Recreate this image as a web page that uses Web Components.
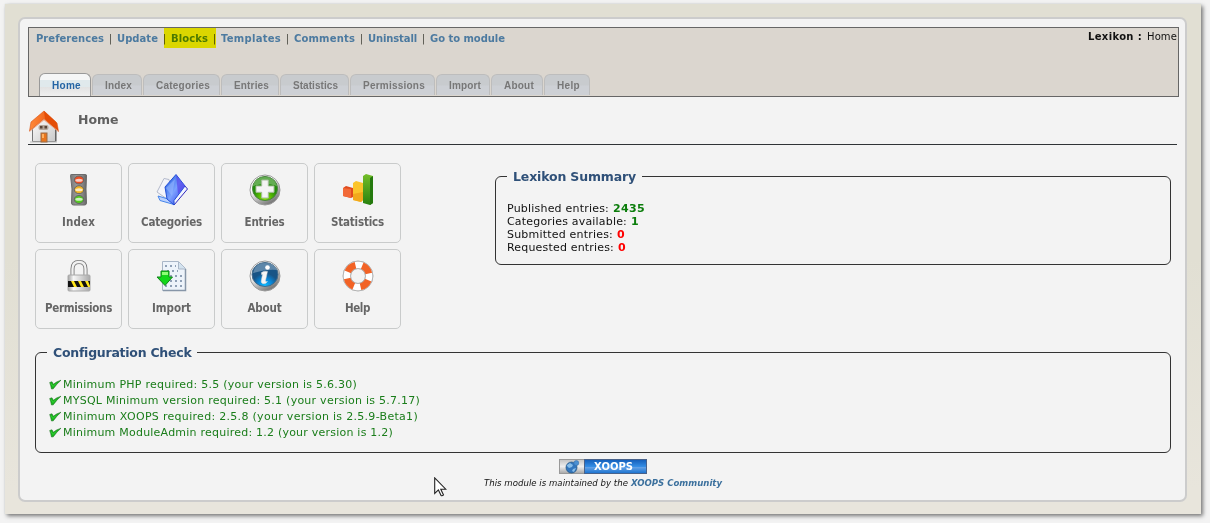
<!DOCTYPE html>
<html lang="en">
<head>
<meta charset="utf-8">
<title>Lexikon - Home</title>
<style>
html,body{margin:0;height:523px;overflow:hidden;background:#f3f3f3}
body{font:11px/13px "DejaVu Sans",Verdana,sans-serif;color:#111}
</style>
</head>
<body>
<admin-page></admin-page>
<script>
const define = (name, html, setup) => {
  const t = document.createElement('template');
  t.innerHTML = html;
  customElements.define(name, class extends HTMLElement {
    connectedCallback() {
      if (this.shadowRoot) return;
      this.attachShadow({mode: 'open'}).append(t.content.cloneNode(true));
      if (setup) setup(this, this.shadowRoot);
    }
  });
};

/* A run of text tracked so that it fills a given width */
define('fit-text', `<style>:host{display:inline-block;white-space:nowrap}span{display:inline-block}</style><span><slot></slot></span>`,
 (el, root) => {
  const w = +el.getAttribute('w'), s = root.querySelector('span');
  const n = el.textContent.length;
  const natural = s.getBoundingClientRect().width;
  if (natural) s.style.letterSpacing = ((w - natural) / n) + 'px';
  el.style.width = w + 'px';
 });

const icons = {
 home:`<svg viewBox="0 0 32 34" width="32" height="34"><defs><linearGradient id="r"><stop offset="0" stop-color="#ff8a3a"/><stop offset="1" stop-color="#e84c08"/></linearGradient><linearGradient id="w" x2="1" y2="1"><stop offset="0" stop-color="#fff"/><stop offset="1" stop-color="#c9c9c9"/></linearGradient></defs><path d="M4.500 18 16 7 27.500 19V31.500H4.500Z" fill="url(#w)" stroke="#777"/><path d="M28 20V31.500" stroke="#555"/><path d="M2 32H29" stroke="#bbb"/><path d="M16 1 3 12 1.500 21 16 9 30.500 21.500 29 13Z" fill="url(#r)" stroke="#d65312" stroke-width=".6"/><path d="m16 1 1 8L30 21 28 12Z" fill="#e44d06"/><path d="M1.500 21.500 16 9.800 30.500 21.500" fill="none" stroke="#e9a382"/><rect x="10.500" y="15" width="10" height="5" rx="2" fill="#b3a599"/><path d="M12 16h2.500v2.500H12zm4.500 0H19v2.500h-2.500z" fill="#594436"/><rect x="13" y="23" width="6" height="9" fill="#e8761e" stroke="#9b6d47"/><path d="M14 24h2v4h-2z" fill="#ffae5d"/></svg>`,
 index:`<svg viewBox="0 0 32 32"><defs><linearGradient id="t"><stop offset="0" stop-color="#777"/><stop offset=".5" stop-color="#a2a2a2"/><stop offset="1" stop-color="#666"/></linearGradient></defs><path d="M7.500 1.500Q7 .500 9 .500h13q2 0 1.500 1.500l-.5 13 .5 14q0 2-2 2h-11q-2 0-2-2l.5-14Z" fill="url(#t)" stroke="#6b6b6b"/><g stroke="#666"><ellipse cx="16" cy="6" rx="4.700" ry="4" fill="#ed4e24"/><ellipse cx="16" cy="15.700" rx="4.700" ry="4" fill="#f0b323"/><ellipse cx="16" cy="25.500" rx="4.700" ry="4" fill="#53cb20"/></g><g fill="#fff" opacity=".72"><ellipse cx="16" cy="6.200" rx="3.700" ry="1.500"/><ellipse cx="16" cy="15.800" rx="3.700" ry="1.500"/><ellipse cx="16" cy="25.300" rx="3.700" ry="1.500"/></g></svg>`,
 categories:`<svg viewBox="0 0 32 32"><defs><linearGradient id="b" x2="1" y2="1"><stop offset="0" stop-color="#1754d9"/><stop offset=".5" stop-color="#7ba2ff"/><stop offset="1" stop-color="#2931e1"/></linearGradient></defs><path d="M1 18 8 4.500l5 1L17 22l-6 3Z" fill="#f3f4fa" stroke="#b4bacb"/><path d="m2 22 10 3 6 5.500-14-4Z" fill="#b9d1ff" stroke="#4785ea"/><path d="m18 31 13.500-16-3-3.500L17 24Z" fill="#f1f5ff" stroke="#2d25bd"/><path d="M9 13 20 .500 29 12 18 26.500V31L11 25Z" fill="url(#b)" stroke="#2450d6"/><path d="M20 1 29 12 22 20Z" fill="#5746ea" opacity=".7"/><path d="M10 14 19 5 16 22Z" fill="#95b5ff" opacity=".6"/></svg>`,
 entries:`<svg viewBox="0 0 32 32"><defs><radialGradient id="g" cy=".9"><stop offset="0" stop-color="#8ee500"/><stop offset="1" stop-color="#218c09"/></radialGradient><linearGradient id="s" x2=".6" y2="1"><stop offset=".4" stop-color="#fff"/><stop offset="1" stop-color="#777"/></linearGradient></defs><circle cx="16" cy="16" r="15" fill="url(#s)" stroke="#999"/><ellipse cx="16" cy="14.500" rx="12.500" ry="12" fill="url(#g)" stroke="#48823e"/><path d="M4 12Q7 3 16 3t12 9q-12-4-24 0" fill="#fff" opacity=".3"/><path d="M12.700 6h6.600v6H25v6.300h-5.700V24h-6.600v-5.700H7V12h5.700Z" fill="#f4f4f4" stroke="#a7bd9d"/></svg>`,
 statistics:`<svg viewBox="0 0 32 32"><defs><linearGradient id="g2" y2="1" x2="0"><stop stop-color="#74be28"/><stop offset="1" stop-color="#27810f"/></linearGradient></defs><path d="m1 14 3-2 7 2v9l-2 1-8-2Z" fill="#e04a1c"/><path d="m1 14 8 1v9l-8-2Z" fill="#f26a38"/><path d="m11 9 3-2 7 2v17l-2 2-8-2Z" fill="#fbc42b"/><path d="M11 20 21 18v8l-2 2-8-2Z" fill="#f2a81c"/><path d="m21 2 3-2 7 2v27l-3 2-7-2Z" fill="url(#g2)"/><path d="m28 4 3-2v27l-3 2Z" fill="#24790d"/></svg>`,
 permissions:`<svg viewBox="0 0 32 32"><defs><linearGradient id="m"><stop stop-color="#a1a1a1"/><stop offset=".25" stop-color="#f6f6f6"/><stop offset="1" stop-color="#aaa"/></linearGradient></defs><path d="M9.500 15V9q0-7 6.500-7t6.500 7v6" fill="none" stroke="#777" stroke-width="4"/><path d="M9.500 15V9q0-7 6.500-7t6.500 7v6" fill="none" stroke="#f1f1f1" stroke-width="2.300"/><rect x="5" y="15" width="22" height="16" rx="1" fill="url(#m)" stroke="#aaa"/><path d="M5 21h22v6H5z" fill="#ffe61b"/><path d="M5 21h3l3 6H5zm6 0h4l3 6h-4zm7 0h4l3 6h-4zm7 0h2v5z" fill="#111"/></svg>`,
 import:`<svg viewBox="0 0 32 32"><path d="M6.500 1.500h16l7 7v22h-23Z" fill="#edf3fa" stroke="#a9b6c7"/><path d="M22.500 2v7h7" fill="#d3e2ee" stroke="#a9b6c7"/><path d="M29.500 9v21.500H7" fill="none" stroke="#8796a8" stroke-width="1.500"/><path d="M9 6h11M11 11h11M14 16h13M14 21h13M9 26h17" stroke="#8fa0b6" stroke-width="2" stroke-dasharray="2 3"/><path d="M5 11h8v6h3.500L9 25.500 1 17h4Z" fill="#12d61a" stroke="#13821a"/><path d="M6 12h6v3H6z" fill="#8dff75"/></svg>`,
 about:`<svg viewBox="0 0 32 32"><defs><radialGradient id="i" cy=".95"><stop stop-color="#12bcff"/><stop offset=".5" stop-color="#0789dc"/><stop offset="1" stop-color="#185486"/></radialGradient><linearGradient id="s" x2=".6" y2="1"><stop offset=".4" stop-color="#fff"/><stop offset="1" stop-color="#777"/></linearGradient></defs><circle cx="16" cy="16" r="15" fill="url(#s)" stroke="#999"/><ellipse cx="16" cy="14.500" rx="13" ry="12" fill="url(#i)" stroke="#466b89"/><path d="M4 13Q6 3 16 3q9 0 12 7-11-1-24 3" fill="#fff" opacity=".3"/><circle cx="18.500" cy="7.500" r="2.300" fill="#fff"/><path d="M12.500 12.500q3-2 6-1l-2 9q0 2 2 1-2 3-5 2-2-1-1-4l1-5-1 0Z" fill="#f5f5f5" stroke="#d6d6d6" stroke-width=".5"/></svg>`,
 help:`<svg viewBox="0 0 32 32"><circle cx="16" cy="16" r="15" fill="none" stroke="#aaa"/><circle cx="16" cy="16" r="11" fill="none" stroke="#b9b9b9" stroke-width="8"/><circle cx="16" cy="16" r="11" fill="none" stroke="#fff" stroke-width="6.500"/><circle cx="16" cy="16" r="11" fill="none" stroke="#f26326" stroke-width="7" pathLength="80" stroke-dasharray="12 8" stroke-dashoffset="-5"/><circle cx="16" cy="16" r="7.500" fill="none" stroke="#aaa" stroke-width=".7"/></svg>`,
 check:`<svg viewBox="0 0 13 11" width="13" height="11"><path d="M.700 3.500 3 2.800 4.300 5.300Q7 2.800 12 1.200 7.500 5 4.300 9.800L2.500 10Q1.800 6.500.700 3.500Z" fill="#18b51c" stroke="#247427" stroke-width=".6"/><path d="m2 4.500 2 3 3-3" fill="none" stroke="#39d83b" stroke-width=".8"/></svg>`,
 cursor:`<svg viewBox="0 0 13 20" width="13" height="20"><path d="M.700.900v15.600l3.700-3.600 2.700 5.700q1.300.600 2.400-.700L6.800 12.200h5Z" fill="#fff" stroke="#222" stroke-width="1.100"/></svg>`,
 globe:`<svg viewBox="0 0 16 14" width="16" height="14"><circle cx="7.500" cy="7.500" r="5.500" fill="#3276bd" stroke="#23517d" stroke-width=".7"/><path d="m3 5 3-2 3 2-1 2-3 1-2-2m6 3 3-1-2 4-2-1" fill="#87bde9"/><circle cx="12.300" cy="3" r="2.500" fill="#4c90d2" stroke="#316da6" stroke-width=".5"/></svg>`
};
define('ui-icon', `<style>:host{display:block;width:32px;height:32px}svg{display:block}</style>`, (el, root) => root.append(document.createRange().createContextualFragment(icons[el.getAttribute('name')])));

define('nav-link', `<style>
:host{display:flex;position:relative;font:bold 10px/13px "DejaVu Sans",sans-serif;color:#4c7aa0}
:host([marked])::after{content:"";position:absolute;left:-7px;right:-8px;top:-4px;height:20px;background:#ff0;mix-blend-mode:multiply}
</style><slot></slot>`);

define('nav-tab', `<style>
:host{display:block;box-sizing:border-box;height:21px;margin-top:1px;padding:3px 0 0 12px;border:1px solid #bdbdbd;border-bottom:0;border-radius:6px 6px 0 0;background:linear-gradient(#c8cbce 0 50%,#cdd0d5 55%);font:bold 10px/16px "Liberation Sans",Arial,sans-serif;color:#777}
:host([active]){height:23px;margin-top:0;padding-top:4px;border-color:#999;background:linear-gradient(#f5f6f6 0 25%,#e0e9ec 26% 58%,#e2e2e2 60%,#f0f0f0);color:#2464a4}
</style><slot></slot>`);

define('module-header', `<style>
:host{display:flex;flex-direction:column;justify-content:space-between;box-sizing:border-box;width:1151px;height:70px;border:1px solid #666;background:#dbd6cf}
.top{display:flex;justify-content:space-between;padding:4px 1px 0 7px}
.links,.crumb{display:flex}.links{color:#333;font:10px/13px "DejaVu Sans",sans-serif}
.links i{font-style:normal;width:13px;text-align:center;color:#4b4b42}
.crumb{font:10px/13px "DejaVu Sans",sans-serif;color:#111;margin-top:-2px}
.tabs{display:flex;gap:1px;height:23px;padding-left:10px}
</style><div class="top"><div class="links"></div><div class="crumb"><b><fit-text w="54">Lexikon :</fit-text></b><span style="width:5px"></span><fit-text w="30">Home</fit-text></div></div><div class="tabs"></div>`, (el, root) => {
 root.querySelector('.links').innerHTML = [['Preferences',68],['Update',41],['Blocks',37],['Templates',60],['Comments',61],['Uninstall',49],['Go to module',75]]
  .map(([t,w]) => `<nav-link ${t==='Blocks'?'marked':''}><fit-text w="${w}">${t}</fit-text></nav-link>`).join('<i>|</i>');
 root.querySelector('.tabs').innerHTML = [['Home',52,29],['Index',50,27],['Categories',77,54],['Entries',58,35],['Statistics',69,45],['Permissions',85,62],['Import',54,32],['About',52,30],['Help',46,23]]
  .map(([t,w,f],i) => `<nav-tab style="width:${w}px" ${i?'':'active'}><fit-text w="${f}">${t}</fit-text></nav-tab>`).join('');
});

define('page-title', `<style>
:host{display:flex;width:1149px;height:34px;border-bottom:1px solid #2f3336;margin-top:13px}
ui-icon{height:34px;margin-right:18px}
div{font:bold 12.500px/17px "DejaVu Sans",sans-serif;color:#606060;margin-top:1px}
</style><ui-icon name="home"></ui-icon><div><fit-text w="39"><slot></slot></fit-text></div>`);

define('menu-button', `<style>
:host{display:flex;flex-direction:column;align-items:center;box-sizing:border-box;width:87px;height:80px;border:1px solid #c9cbcb;border-radius:5px;padding-top:10px;font:bold 11.500px/14px "DejaVu Sans Condensed","DejaVu Sans",sans-serif;color:#666}
.pic{margin:0 0 9px}
</style><div class="pic"></div><slot></slot>`, (el, root) => {
 root.querySelector('.pic').innerHTML = `<ui-icon name="${el.getAttribute('icon')}"></ui-icon>`;
});

define('info-panel', `<style>
:host{display:block}
fieldset{box-sizing:border-box;height:100%;margin:0;border:1px solid #333;border-radius:6px;padding:0;padding-left:11px;min-width:0}
legend{margin:0;padding:0 6px;font:bold 12.500px/15px "DejaVu Sans",sans-serif;color:#2f5078}
</style><fieldset><legend><slot name="title"></slot></legend><slot></slot></fieldset>`);

define('check-row', `<style>:host{display:flex;height:16px;color:#1a7d1a;font:11px/16px "DejaVu Sans",sans-serif}ui-icon{width:13px;height:11px;margin:2px 1px 0 2px}</style><ui-icon name="check"></ui-icon><slot></slot>`);

define('xoops-badge', `<style>
:host{display:flex;box-sizing:border-box;width:88px;height:15px;border:1px solid #999}
.l{width:25px;background:linear-gradient(#c6c6c6,#eee 50%,#aaa);padding-left:4px;box-sizing:border-box}
ui-icon{width:16px;height:14px}
.r{flex:1;margin:-1px;border:1px solid #48628b;background:linear-gradient(#1560bb,#348de5 50%,#6aa6e9 52%,#1d74d0);color:#fff;font:bold 10px/13px "DejaVu Sans",sans-serif;padding-left:9px}
</style><div class="l"><ui-icon name="globe"></ui-icon></div><div class="r"><fit-text w="39">XOOPS</fit-text></div>`);

const buttons = [['Index',33],['Categories',61],['Entries',40],['Statistics',53],['Permissions',67],['Import',39],['About',34],['Help',25]];
define('admin-page', `<style>
:host{display:block;box-sizing:border-box;height:523px;padding:4px 9px 9px 5px}
.frame{box-sizing:border-box;width:1196px;height:510px;padding:13px;background:linear-gradient(#e1dfd3,#e1dfd3 50%,#e8e5dc 95%);box-shadow:2px 2px 4px #777,0 0 1px #cfdcdb}
main{box-sizing:border-box;width:1169px;height:485px;border:2px solid #ccc;border-radius:7px;background:#f3f3f3;padding:8px}
.overview{display:flex;justify-content:space-between;margin:18px 6px 0 7px}
.grid{display:grid;grid-template-columns:repeat(4,87px);gap:6px}
.summary{width:676px;height:96px;margin-top:6px}
.config{width:1136px;height:108px;margin:16px 0 0 7px}
.rows{padding-top:18px}.rows div{display:flex;gap:4px;height:13px;white-space:nowrap}
.green{color:#0b7d0b;font-weight:bold}.red{color:#f00;font-weight:bold}
.checks{padding-top:17px}
footer{display:flex;flex-direction:column;align-items:center;margin:6px 0 0 1px}
.note{display:flex;gap:3px;font:italic 9.500px/14px "DejaVu Sans Condensed","DejaVu Sans",sans-serif;margin-top:2px;color:#111}
.note b{color:#3b709d}
.pointer{position:absolute;left:434px;top:477px;width:13px;height:20px}
</style><div class="frame"><main>
<module-header></module-header>
<page-title>Home</page-title>
<section class="overview"><div class="grid"></div>
<info-panel class="summary"><fit-text slot="title" w="123">Lexikon Summary</fit-text><div class="rows">
<div><fit-text w="102">Published entries:</fit-text> <fit-text class="green" w="32">2435</fit-text></div>
<div><fit-text w="120">Categories available:</fit-text> <fit-text class="green" w="8">1</fit-text></div>
<div><fit-text w="106">Submitted entries:</fit-text> <fit-text class="red" w="8">0</fit-text></div>
<div><fit-text w="107">Requested entries:</fit-text> <fit-text class="red" w="8">0</fit-text></div>
</div></info-panel></section>
<info-panel class="config"><fit-text slot="title" w="138">Configuration Check</fit-text><div class="checks">
<check-row><fit-text w="294">Minimum PHP required: 5.5 (your version is 5.6.30)</fit-text></check-row>
<check-row><fit-text w="357">MYSQL Minimum version required: 5.1 (your version is 5.7.17)</fit-text></check-row>
<check-row><fit-text w="355">Minimum XOOPS required: 2.5.8 (your version is 2.5.9-Beta1)</fit-text></check-row>
<check-row><fit-text w="330">Minimum ModuleAdmin required: 1.2 (your version is 1.2)</fit-text></check-row>
</div></info-panel>
<footer><xoops-badge></xoops-badge><div class="note"><fit-text w="144">This module is maintained by the</fit-text><b><fit-text w="91">XOOPS Community</fit-text></b></div></footer>
</main></div><ui-icon class="pointer" name="cursor"></ui-icon>`, (el, root) => {
 root.querySelector('.grid').innerHTML = buttons.map(([t, w]) =>
  `<menu-button icon="${t.toLowerCase()}"><fit-text w="${w}">${t}</fit-text></menu-button>`).join('');
});
</script>
</body>
</html>
